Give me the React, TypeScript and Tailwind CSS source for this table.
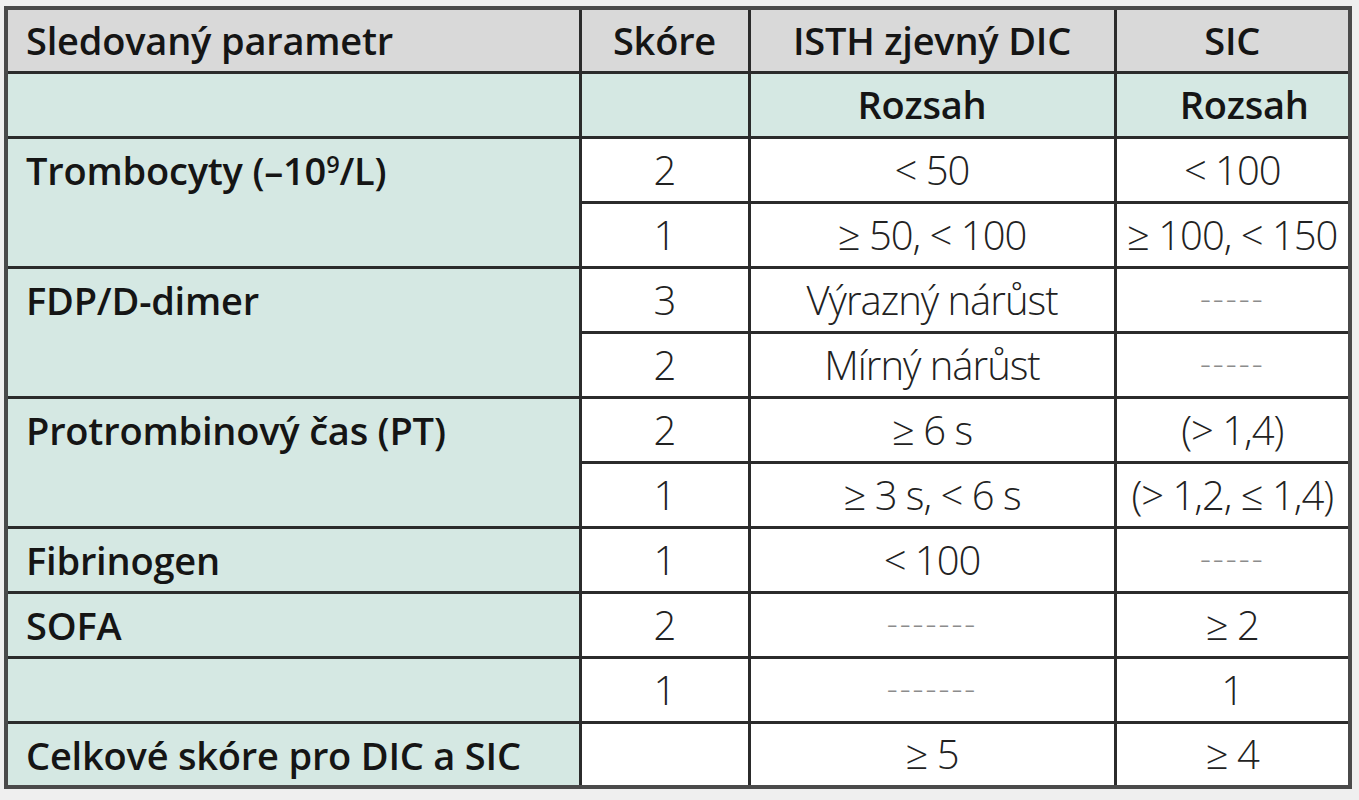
const DASH5 = '-----';
const DASH7 = '-------';

type Row = {
  label?: string | JSX.Element;
  span?: number;
  score: string;
  isth: string;
  sic: string;
};

const rows: Row[] = [
  { label: <>Trombocyty (–10<sup className="text-[0.62em]">9</sup>/L)</>, span: 2, score: '2', isth: '< 50', sic: '< 100' },
  { score: '1', isth: '≥ 50, < 100', sic: '≥ 100, < 150' },
  { label: 'FDP/D-dimer', span: 2, score: '3', isth: 'Výrazný nárůst', sic: DASH5 },
  { score: '2', isth: 'Mírný nárůst', sic: DASH5 },
  { label: 'Protrombinový čas (PT)', span: 2, score: '2', isth: '≥ 6 s', sic: '(> 1,4)' },
  { score: '1', isth: '≥ 3 s, < 6 s', sic: '(> 1,2, ≤ 1,4)' },
  { label: 'Fibrinogen', span: 1, score: '1', isth: '< 100', sic: DASH5 },
  { label: 'SOFA', span: 1, score: '2', isth: DASH7, sic: '≥ 2' },
  { label: '', span: 1, score: '1', isth: DASH7, sic: '1' },
  { label: 'Celkové skóre pro DIC a SIC', span: 1, score: '', isth: '≥ 5', sic: '≥ 4' },
];

function Val({ text }: { text: string }) {
  if (text.startsWith('---')) {
    return <span className="text-[#8c8c8c] text-[34px] tracking-[2px] relative -top-[4px]">{text}</span>;
  }
  return <>{text}</>;
}

export default function App() {
  const cell = 'border-[3px] border-[#2b2b2b]';
  const head = 'font-semibold text-[38px] text-[#151515] tracking-[-0.2px]';
  const body = 'font-light text-[40px] text-[#222] text-center tracking-[-1px] whitespace-nowrap';
  return (
    <div className="min-h-screen bg-[#efefef] pt-[6px] pl-[4px]" style={{ fontFamily: '"Open Sans", "Noto Sans", sans-serif' }}>
      <table className="border-collapse table-fixed w-[1344px] border-[4px] border-[#4a4a4a]">
        <colgroup>
          <col className="w-[574px]" />
          <col className="w-[169px]" />
          <col className="w-[366px]" />
          <col className="w-[235px]" />
        </colgroup>
        <thead>
          <tr className="h-[64px] bg-[#d9d9d9]">
            <th className={`${cell} ${head} text-left pl-[18px]`}>Sledovaný parametr</th>
            <th className={`${cell} ${head} text-center`}>Skóre</th>
            <th className={`${cell} ${head} text-center`}>ISTH zjevný DIC</th>
            <th className={`${cell} ${head} text-center`}>SIC</th>
          </tr>
          <tr className="h-[65px] bg-[#d5e8e3]">
            <th className={cell}></th>
            <th className={cell}></th>
            <th className={`${cell} ${head} text-center pr-[20px]`}>Rozsah</th>
            <th className={`${cell} ${head} text-center pl-[24px]`}>Rozsah</th>
          </tr>
        </thead>
        <tbody>
          {rows.map((r, i) => (
            <tr key={i} className="h-[65px]">
              {r.span !== undefined && (
                <td
                  rowSpan={r.span}
                  className={`${cell} ${head} bg-[#d5e8e3] text-left align-top pl-[18px] pt-[8px] leading-[46px]`}
                >
                  {r.label}
                </td>
              )}
              <td className={`${cell} ${body} bg-white`}>{r.score}</td>
              <td className={`${cell} ${body} bg-white`}><Val text={r.isth} /></td>
              <td className={`${cell} ${body} bg-white`}><Val text={r.sic} /></td>
            </tr>
          ))}
        </tbody>
      </table>
    </div>
  );
}
